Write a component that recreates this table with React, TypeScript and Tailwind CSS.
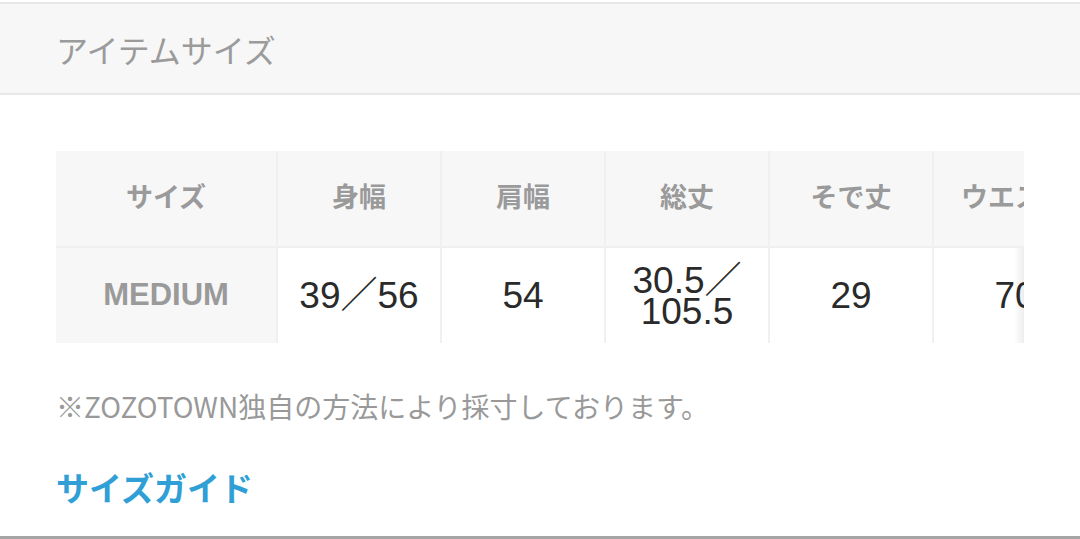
import React from "react";

const jp = "font-['Liberation_Sans','Noto_Sans_CJK_JP',sans-serif]";

const columns = ["身幅", "肩幅", "総丈", "そで丈", "ウエスト"];
const values = ["39／56", "54", "30.5／\n105.5", "29", "70"];

export default function App() {
  return (
    <div className={`w-[1080px] h-[539px] bg-white flex flex-col border-b-[3px] border-[#a5a5a5] ${jp}`}>
      <div className="mt-[2px] h-[93px] shrink-0 bg-[#f7f7f7] border-y-[2px] border-[#e8e8e8] px-[56px] flex items-center">
        <h2 className="text-[32px] text-[#9b9b9b] font-['Noto_Sans_CJK_JP',sans-serif] font-normal">アイテムサイズ</h2>
      </div>

      <div className="mt-[56px] mx-[56px] relative overflow-hidden">
        <div className="grid grid-cols-[220px_162px_162px_162px_162px_162px] grid-rows-[95px_95px] gap-[2px] bg-[#f0f0f0] w-max">
          <div className="bg-[#f7f7f7] flex items-center justify-center text-[27px] font-bold text-[#9a9a9a]">サイズ</div>
          {columns.map((c) => (
            <div key={c} className="bg-[#f7f7f7] flex items-center justify-center text-[27px] font-bold text-[#9a9a9a] whitespace-nowrap">
              {c}
            </div>
          ))}
          <div className="bg-[#f7f7f7] flex items-center justify-center text-[31px] font-bold text-[#9a9a9a]">MEDIUM</div>
          {values.map((v, i) => (
            <div key={i} className="bg-white flex items-center justify-center text-center text-[37px] leading-[31px] text-[#2a2a2a] whitespace-pre-line">
              {v}
            </div>
          ))}
        </div>
        <div className="absolute right-0 top-[97px] bottom-0 w-[10px] bg-gradient-to-r from-transparent to-[#00000012]" />
      </div>

      <p className="mt-[44px] px-[56px] text-[28px] leading-[38px] text-[#999] font-['Noto_Sans_CJK_JP',sans-serif]">
        ※ZOZOTOWN独自の方法により採寸しております。
      </p>

      <a className="mt-[42px] px-[56px] text-[33px] leading-[40px] font-bold text-[#2f9fd6] font-['Noto_Sans_CJK_JP',sans-serif]">
        サイズガイド
      </a>
    </div>
  );
}
